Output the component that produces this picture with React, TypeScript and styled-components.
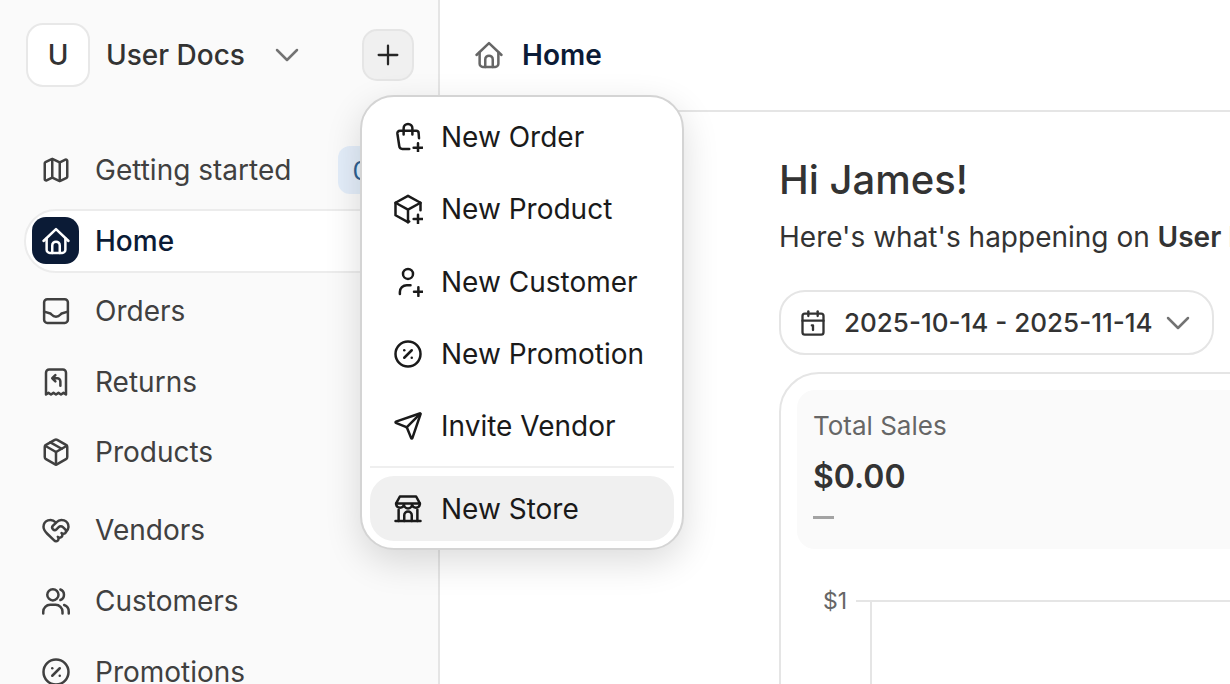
import React from 'react'
import styled, { createGlobalStyle } from 'styled-components'
import { ChevronDown, CirclePercent, HeartHandshake, Map as MapIcon, Package, Plus, Send, Calendar1 } from 'lucide-react'

const GlobalStyle = createGlobalStyle`
    html, body {
        margin: 0;
        height: 100%;
        overflow: hidden;
        background: #fff;
    }
    body {
        font-family: Inter, "Liberation Sans", sans-serif;
    }
`

const Svg = styled.svg.attrs({
    viewBox: '0 0 24 24',
    fill: 'none',
    stroke: 'currentColor',
    strokeWidth: 2,
    strokeLinecap: 'round',
    strokeLinejoin: 'round',
})`
    width: 28px;
    height: 28px;
    flex: none;
`

const HomeIcon = () => (
    <Svg>
        <path d="M2 12 12 2.500 22 12" />
        <path d="M4.500 10v9a2.500 2.500 0 0 0 2.500 2.500h10a2.500 2.500 0 0 0 2.500-2.500v-9" />
        <path d="M9 21.500V15.500a3 3 0 0 1 6 0v6" />
    </Svg>
)

const InboxIcon = () => (
    <Svg>
        <rect x="2.500" y="2.500" width="19" height="19" rx="2.500" />
        <path d="M2.500 12.500 7.500 14c1 .4 1.500 2.500 4.500 2.500s3.500-2.100 4.500-2.500l5-1.500" />
    </Svg>
)

const ReceiptIcon = () => (
    <Svg>
        <path d="M4 22V4.500a2.500 2.500 0 0 1 2.500-2.500h11A2.500 2.500 0 0 1 20 4.500V22l-2-1.300-2 1.300-2-1.300-2 1.300-2-1.300L8 22l-2-1.300z" />
        <path d="M11.500 6.500 9 9l2.500 2.500M9 9h4a2.500 2.500 0 0 1 2.500 2.500V15" />
    </Svg>
)

const UsersIcon = () => (
    <Svg>
        <circle cx="9.500" cy="7" r="4.500" />
        <path d="M15.500 2.800a4.500 4.500 0 0 1 0 8.400" />
        <path d="M1.800 22v-1.500a5.500 5.500 0 0 1 5.500-5.500h4.400a5.500 5.500 0 0 1 5.500 5.500V22" />
        <path d="M18.500 15.200a5.500 5.500 0 0 1 3.700 5.300V22" />
    </Svg>
)

const BagPlusIcon = () => (
    <Svg>
        <path d="M13 21.500H7.500A2.500 2.500 0 0 1 5 19.200L3.500 9.200A2 2 0 0 1 5.500 7h13a2 2 0 0 1 2 2l.3 4" />
        <path d="M8.500 10V5a3.500 3.500 0 0 1 7 0v5" />
        <path d="M16.500 20.500h7M20 17v7" />
    </Svg>
)

const BoxPlusIcon = () => (
    <Svg>
        <path d="M22 13V7L12 1.500 2 7v10l10 5.500 1-.5" />
        <path d="M2 7l10 5.500L22 7M12 12.500v10" />
        <path d="M16.500 20h7M20 16.500v7" />
    </Svg>
)

const UserPlusIcon = () => (
    <Svg>
        <circle cx="12" cy="5.500" r="4" />
        <path d="M5.500 21.500V20a5.500 5.500 0 0 1 5.500-5.500h3" />
        <path d="M16.800 19.700h7M20.300 16.200v7" />
    </Svg>
)

const StoreIcon = () => (
    <Svg>
        <path d="M5.500 2h13l3 5.500H2.500z" />
        <path d="M2.500 7.500v.8a3.200 3.200 0 0 0 6.300 0 3.200 3.200 0 0 0 6.400 0 3.200 3.200 0 0 0 6.300 0v-.8" />
        <path d="M4.500 12.500v9M19.500 12.500v9" />
        <path d="M9 21.500V17a3 3 0 0 1 6 0v4.500" />
        <path d="M2 21.500h20" />
    </Svg>
)

const Page = styled.div`
    position: relative;
    display: flex;
    width: 1230px;
    height: 684px;
    overflow: hidden;
`

const Sidebar = styled.aside`
    flex: none;
    width: 440px;
    box-sizing: border-box;
    padding: 23px 24px 0 22px;
    background: #fafafa;
    border-right: 2px solid #e5e5e5;
`

const Workspace = styled.div`
    display: flex;
    align-items: center;
    height: 64px;
    padding-left: 4px;
    margin-bottom: 51px;
`

const Avatar = styled.div`
    display: flex;
    align-items: center;
    justify-content: center;
    flex: none;
    width: 64px;
    height: 64px;
    box-sizing: border-box;
    background: #fff;
    border: 2px solid #e8e8e8;
    border-radius: 17px;
    font-size: 28px;
    font-weight: 500;
    color: #333;
`

const WorkspaceName = styled.span`
    margin-left: 16px;
    font-size: 28px;
    font-weight: 500;
    color: #333;
`

const Chevron = styled.span<{ $gap: number }>`
    display: flex;
    flex: none;
    margin-left: ${p => p.$gap}px;
    color: #737373;

    svg {
        width: 40px;
        height: 40px;
        stroke-width: 1.500;
    }
`

const AddButton = styled.button`
    display: flex;
    align-items: center;
    justify-content: center;
    flex: none;
    width: 52px;
    height: 52px;
    margin-left: auto;
    padding: 0;
    background: #f0f0f0;
    border: 2px solid #e5e5e5;
    border-radius: 15px;
    color: #262626;

    svg {
        width: 32px;
        height: 32px;
        stroke-width: 1.700;
    }
`

const NavGroup = styled.nav`
    display: flex;
    flex-direction: column;
    gap: 6.600px;
    margin-bottom: 14px;
`

const NavRow = styled.div<{ $active?: boolean }>`
    display: flex;
    align-items: center;
    flex: none;
    height: 64px;
    box-sizing: border-box;
    margin-left: 2px;
    padding-left: 6px;
    border-radius: 32px;
    border: 2px solid ${p => (p.$active ? '#ececec' : 'transparent')};
    background: ${p => (p.$active ? '#fff' : 'transparent')};
    color: ${p => (p.$active ? '#0b1b36' : '#404040')};
    font-size: 28px;
    font-weight: ${p => (p.$active ? 500 : 400)};

    svg {
        width: 30px;
        height: 30px;
        flex: none;
    }
`

const NavIcon = styled.span<{ $active?: boolean }>`
    display: flex;
    align-items: center;
    justify-content: center;
    flex: none;
    width: 47px;
    height: 47px;
    margin-right: 16px;
    border-radius: 14px;
    background: ${p => (p.$active ? '#0b1b36' : 'transparent')};
    color: ${p => (p.$active ? '#fff' : '#404040')};
`

const Badge = styled.span`
    display: flex;
    align-items: center;
    height: 48px;
    margin-left: auto;
    margin-right: 4px;
    padding: 0 14px;
    border-radius: 12px;
    background: #e3edf9;
    color: #2f5f8f;
    font-size: 26px;
`

const Main = styled.main`
    flex: 1;
    min-width: 0;
    background: #fff;
`

const Header = styled.header`
    display: flex;
    align-items: center;
    gap: 18px;
    height: 112px;
    box-sizing: border-box;
    padding-left: 34px;
    border-bottom: 2px solid #e5e5e5;
    font-size: 28px;
    font-weight: 600;
    color: #0b1b36;

    svg {
        width: 30px;
        height: 30px;
        color: #666;
    }
`

const Content = styled.div`
    padding: 44px 0 0 339px;
`

const Title = styled.h1`
    margin: 0;
    font-size: 40px;
    line-height: 48px;
    font-weight: 500;
    color: #333;
`

const Subtitle = styled.p`
    margin: 13px 0 0;
    font-size: 28px;
    line-height: 40px;
    white-space: nowrap;
    color: #333;

    b {
        font-weight: 600;
    }
`

const DatePill = styled.div`
    display: inline-flex;
    align-items: center;
    height: 65px;
    box-sizing: border-box;
    margin-top: 33px;
    padding: 0 14px 0 18px;
    background: #fff;
    border: 2px solid #e5e5e5;
    border-radius: 26px;
    font-size: 26px;
    font-weight: 500;
    color: #333;
    white-space: nowrap;

    > svg {
        width: 28px;
        height: 28px;
        flex: none;
        margin-right: 17px;
    }
`

const Card = styled.section`
    width: 620px;
    height: 500px;
    box-sizing: border-box;
    margin-top: 17px;
    padding: 16px 15px 15px 16px;
    border: 2px solid #e5e5e5;
    border-radius: 40px;
`

const Stat = styled.div`
    display: flex;
    flex-direction: column;
    height: 159px;
    box-sizing: border-box;
    padding: 17px 17px 0 16px;
    background: #fafafa;
    border-radius: 18px;
`

const StatLabel = styled.span`
    font-size: 26px;
    line-height: 38px;
    color: #666;
`

const StatValue = styled.span`
    margin-top: 8px;
    font-size: 32px;
    line-height: 48px;
    font-weight: 600;
    color: #333;
`

const StatDelta = styled.span`
    width: 21px;
    height: 3px;
    margin-top: 15px;
    background: #a3a3a3;
`

const Chart = styled.svg`
    display: block;
    width: 100%;
    height: 140px;
    margin-top: 40px;
`

const ChartLabel = styled.text`
    font-family: Inter, "Liberation Sans", sans-serif;
    font-size: 23px;
    fill: #666;
`

const Menu = styled.div`
    position: absolute;
    left: 360px;
    top: 95px;
    width: 323.500px;
    height: 455px;
    box-sizing: border-box;
    padding: 4px 7.500px 4px 8px;
    background: #fff;
    border: 2px solid #d4d4d4;
    border-radius: 34px;
    box-shadow: 0 12px 36px rgba(0, 0, 0, 0.14);
`

const MenuItem = styled.div<{ $active?: boolean }>`
    display: flex;
    align-items: center;
    gap: 18px;
    height: ${p => (p.$active ? 65 : 72.300)}px;
    padding-left: 23px;
    border-radius: 24px;
    background: ${p => (p.$active ? '#f0f0f0' : 'transparent')};
    color: #1a1a1a;
    font-size: 28px;

    svg {
        width: 30px;
        height: 30px;
        flex: none;
    }
`

const MenuDivider = styled.div`
    height: 2px;
    margin: 4px 0 8px;
    background: #efefef;
`

const navTop = [
    { label: 'Orders', icon: <InboxIcon /> },
    { label: 'Returns', icon: <ReceiptIcon /> },
    { label: 'Products', icon: <Package /> },
]

const navBottom = [
    { label: 'Vendors', icon: <HeartHandshake /> },
    { label: 'Customers', icon: <UsersIcon /> },
    { label: 'Promotions', icon: <CirclePercent /> },
]

const menuItems = [
    { label: 'New Order', icon: <BagPlusIcon /> },
    { label: 'New Product', icon: <BoxPlusIcon /> },
    { label: 'New Customer', icon: <UserPlusIcon /> },
    { label: 'New Promotion', icon: <CirclePercent /> },
    { label: 'Invite Vendor', icon: <Send /> },
]

const App = () => {
    return (
        <Page>
            <GlobalStyle />
            <Sidebar>
                <Workspace>
                    <Avatar>U</Avatar>
                    <WorkspaceName>User Docs</WorkspaceName>
                    <Chevron $gap={22}><ChevronDown /></Chevron>
                    <AddButton><Plus /></AddButton>
                </Workspace>
                <NavGroup>
                    <NavRow>
                        <NavIcon><MapIcon /></NavIcon>
                        Getting started
                        <Badge>0/5</Badge>
                    </NavRow>
                    <NavRow $active>
                        <NavIcon $active><HomeIcon /></NavIcon>
                        Home
                    </NavRow>
                    {navTop.map(item => (
                        <NavRow key={item.label}>
                            <NavIcon>{item.icon}</NavIcon>
                            {item.label}
                        </NavRow>
                    ))}
                </NavGroup>
                <NavGroup>
                    {navBottom.map(item => (
                        <NavRow key={item.label}>
                            <NavIcon>{item.icon}</NavIcon>
                            {item.label}
                        </NavRow>
                    ))}
                </NavGroup>
            </Sidebar>
            <Main>
                <Header>
                    <HomeIcon />
                    Home
                </Header>
                <Content>
                    <Title>Hi James!</Title>
                    <Subtitle>Here's what's happening on <b>User Docs</b></Subtitle>
                    <DatePill>
                        <Calendar1 />
                        2025-10-14 - 2025-11-14
                        <Chevron $gap={5}><ChevronDown /></Chevron>
                    </DatePill>
                    <Card>
                        <Stat>
                            <StatLabel>Total Sales</StatLabel>
                            <StatValue>$0.00</StatValue>
                            <StatDelta />
                        </Stat>
                        <Chart>
                            <ChartLabel x="26" y="20">$1</ChartLabel>
                            <path d="M59 12H620M74 12V140" stroke="#e5e5e5" strokeWidth="2" fill="none" />
                        </Chart>
                    </Card>
                </Content>
            </Main>
            <Menu>
                {menuItems.map(item => (
                    <MenuItem key={item.label}>
                        {item.icon}
                        {item.label}
                    </MenuItem>
                ))}
                <MenuDivider />
                <MenuItem $active>
                    <StoreIcon />
                    New Store
                </MenuItem>
            </Menu>
        </Page>
    )
}

export default App
